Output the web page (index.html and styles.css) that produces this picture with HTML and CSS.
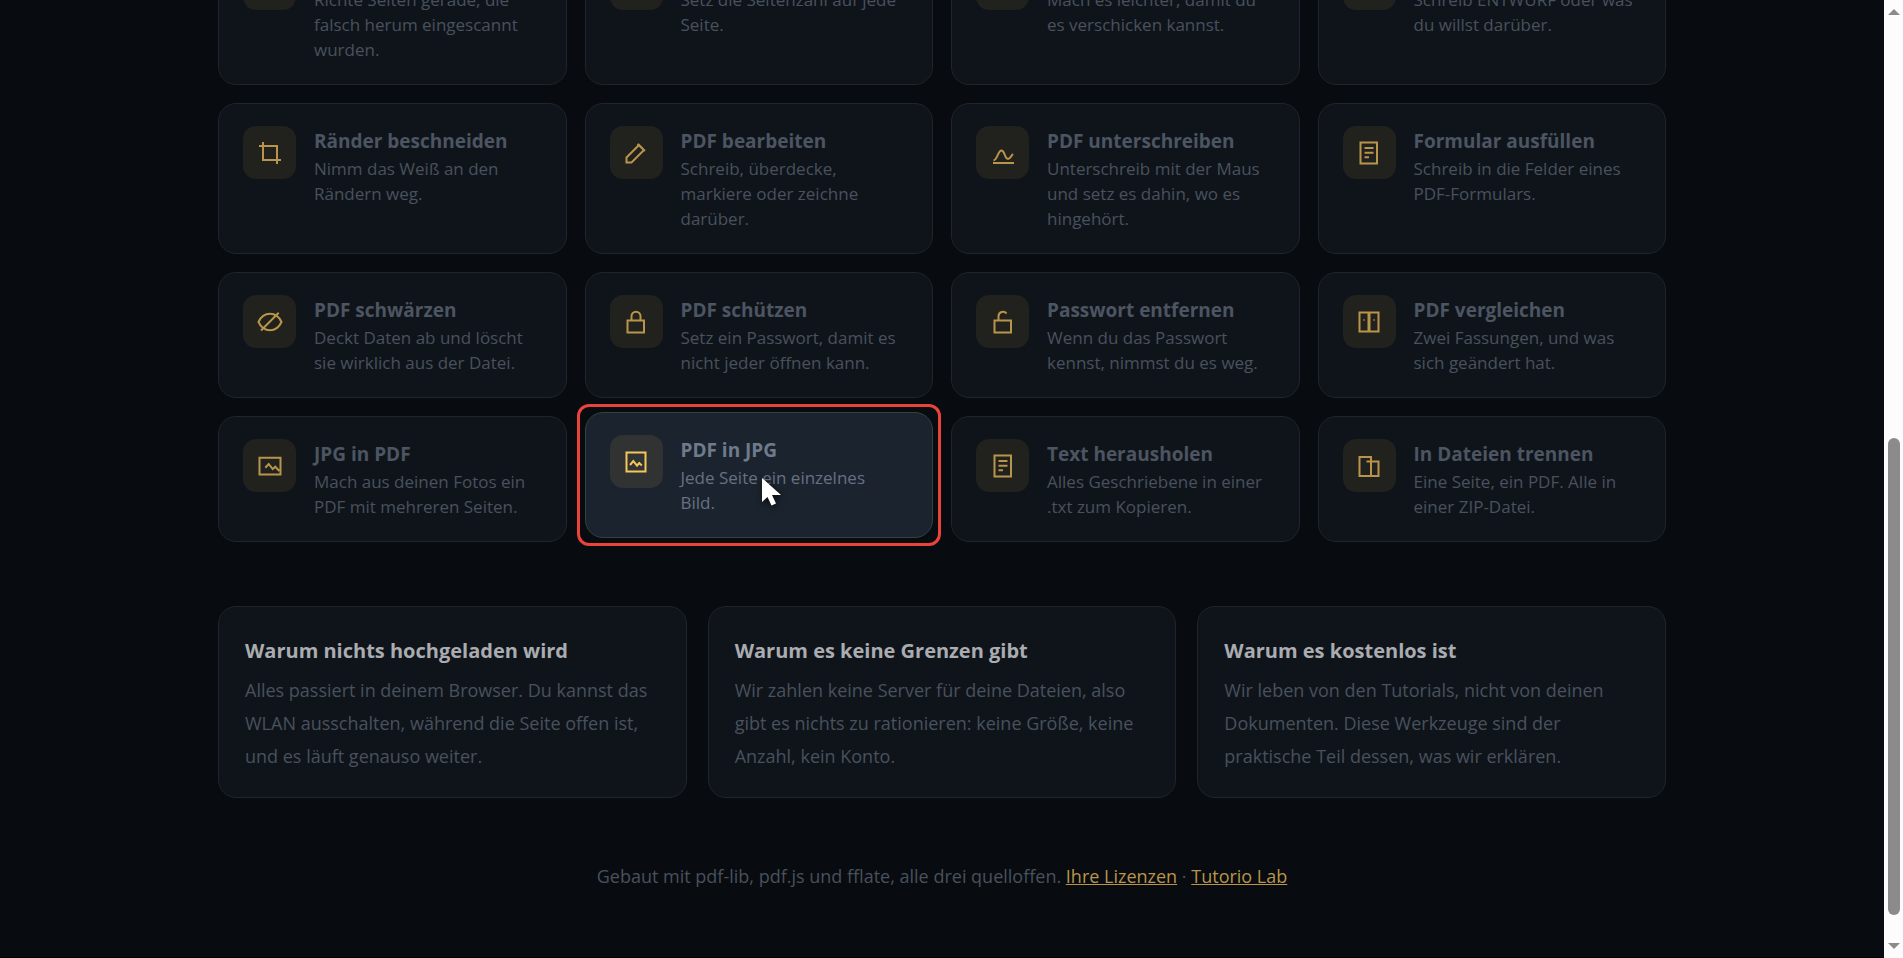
FILE: index.html
```html
<!DOCTYPE html>
<html lang="de">
<head>
    <meta charset="UTF-8">
    <meta name="viewport" content="width=device-width, initial-scale=1.0">
    <title>PDF-Werkzeuge</title>
    <link rel="stylesheet" href="styles.css">
</head>
<body>
    <div class="page">
        <main class="wrap">
            <div class="tools">
                <a class="tool" href="#">
                    <span class="tool-icon"></span>
                    <span class="tool-text">
                        <strong>Scan begradigen</strong>
                        <span>Richte Seiten gerade, die falsch herum eingescannt wurden.</span>
                    </span>
                </a>
                <a class="tool" href="#">
                    <span class="tool-icon"></span>
                    <span class="tool-text">
                        <strong>Seiten nummerieren</strong>
                        <span>Setz die Seitenzahl auf jede Seite.</span>
                    </span>
                </a>
                <a class="tool" href="#">
                    <span class="tool-icon"></span>
                    <span class="tool-text">
                        <strong>PDF verkleinern</strong>
                        <span>Mach es leichter, damit du es verschicken kannst.</span>
                    </span>
                </a>
                <a class="tool" href="#">
                    <span class="tool-icon"></span>
                    <span class="tool-text">
                        <strong>Wasserzeichen</strong>
                        <span>Schreib ENTWURF oder was du willst darüber.</span>
                    </span>
                </a>

                <a class="tool" href="#">
                    <span class="tool-icon"><svg viewBox="0 0 26 26"><path d="M6 2v18h18M2 6h18v18"/></svg></span>
                    <span class="tool-text">
                        <strong>Ränder beschneiden</strong>
                        <span>Nimm das Weiß an den Rändern weg.</span>
                    </span>
                </a>
                <a class="tool" href="#">
                    <span class="tool-icon"><svg viewBox="0 0 26 26"><path d="M3.5 22.5v-5L16 5l5 5L8.5 22.5zM14.5 4l7.5 7"/></svg></span>
                    <span class="tool-text">
                        <strong>PDF bearbeiten</strong>
                        <span>Schreib, überdecke, markiere oder zeichne darüber.</span>
                    </span>
                </a>
                <a class="tool" href="#">
                    <span class="tool-icon"><svg viewBox="0 0 26 26"><path d="M3 23h21M3.5 20.5c4-1 4.5-10 8-10s3 8.5 6.500 8.500c2 0 3-3 5-5"/></svg></span>
                    <span class="tool-text">
                        <strong>PDF unterschreiben</strong>
                        <span>Unterschreib mit der Maus und setz es dahin, wo es hingehört.</span>
                    </span>
                </a>
                <a class="tool" href="#">
                    <span class="tool-icon"><svg viewBox="0 0 26 26"><path d="M4.5 2.5H21v21H4.5zM8.5 8h9M8.5 12.8h9M8.5 17.3H13"/></svg></span>
                    <span class="tool-text">
                        <strong>Formular ausfüllen</strong>
                        <span>Schreib in die Felder eines PDF-Formulars.</span>
                    </span>
                </a>

                <a class="tool" href="#">
                    <span class="tool-icon"><svg viewBox="0 0 26 26"><path d="M1.5 13C4 7.500 8.500 4.800 13 4.800S22 7.500 24.500 13C22 18.500 17.500 21.200 13 21.200S4 18.500 1.500 13zM4 21.500L21.700 3.700"/></svg></span>
                    <span class="tool-text">
                        <strong>PDF schwärzen</strong>
                        <span>Deckt Daten ab und löscht sie wirklich aus der Datei.</span>
                    </span>
                </a>
                <a class="tool" href="#">
                    <span class="tool-icon"><svg viewBox="0 0 26 26"><path d="M4.5 11.5H21v12H4.5zM8.500 11.500V7.200a4.500 4.500 0 0 1 9 0v4.300"/></svg></span>
                    <span class="tool-text">
                        <strong>PDF schützen</strong>
                        <span>Setz ein Passwort, damit es nicht jeder öffnen kann.</span>
                    </span>
                </a>
                <a class="tool" href="#">
                    <span class="tool-icon"><svg viewBox="0 0 26 26"><path d="M4.5 11.5H21v12H4.5zM8.500 11.500V7.200a4.500 4.500 0 0 1 8-2.700"/></svg></span>
                    <span class="tool-text">
                        <strong>Passwort entfernen</strong>
                        <span>Wenn du das Passwort kennst, nimmst du es weg.</span>
                    </span>
                </a>
                <a class="tool" href="#">
                    <span class="tool-icon"><svg viewBox="0 0 26 26"><path d="M3.5 3.5h9v19h-9zM13.500 3.500h9v19h-9zM7.500 11h1M17.500 11h1"/></svg></span>
                    <span class="tool-text">
                        <strong>PDF vergleichen</strong>
                        <span>Zwei Fassungen, und was sich geändert hat.</span>
                    </span>
                </a>

                <a class="tool" href="#">
                    <span class="tool-icon"><svg viewBox="0 0 26 26"><path d="M2.5 4.800h21v16.700h-21zM8.300 14.700l3.400-3.700 4 5 2.600-2.300 4 4.300"/></svg></span>
                    <span class="tool-text">
                        <strong>JPG in PDF</strong>
                        <span>Mach aus deinen Fotos ein PDF mit mehreren Seiten.</span>
                    </span>
                </a>
                <a class="tool tool-active" href="#">
                    <span class="tool-icon"><svg viewBox="0 0 26 26"><path d="M3.5 3.5h19v19h-19zM7 16l3.300-4 3.700 4.700 2.200-2.700 2.600 2.500"/></svg></span>
                    <span class="tool-text">
                        <strong>PDF in JPG</strong>
                        <span>Jede Seite ein einzelnes Bild.</span>
                    </span>
                    <svg class="cursor" viewBox="0 0 20 28"><path d="M0 0v24l5.500-5 4 8.500 4.500-2-4-8.500h9z"/></svg>
                </a>
                <a class="tool" href="#">
                    <span class="tool-icon"><svg viewBox="0 0 26 26"><path d="M4.5 2.5H21v21H4.5zM8.5 8h9M8.5 12.8h9M8.5 17.3H13"/></svg></span>
                    <span class="tool-text">
                        <strong>Text herausholen</strong>
                        <span>Alles Geschriebene in einer .txt zum Kopieren.</span>
                    </span>
                </a>
                <a class="tool" href="#">
                    <span class="tool-icon"><svg viewBox="0 0 26 26"><path d="M3.5 4H15v19H3.5zM10.5 8.5h12V23H15"/></svg></span>
                    <span class="tool-text">
                        <strong>In Dateien trennen</strong>
                        <span>Eine Seite, ein PDF. Alle in einer ZIP-Datei.</span>
                    </span>
                </a>
            </div>

            <div class="reasons">
                <section class="reason">
                    <h2>Warum nichts hochgeladen wird</h2>
                    <p>Alles passiert in deinem Browser. Du kannst das WLAN ausschalten, während die Seite offen ist, und es läuft genauso weiter.</p>
                </section>
                <section class="reason">
                    <h2>Warum es keine Grenzen gibt</h2>
                    <p>Wir zahlen keine Server für deine Dateien, also gibt es nichts zu rationieren: keine Größe, keine Anzahl, kein Konto.</p>
                </section>
                <section class="reason">
                    <h2>Warum es kostenlos ist</h2>
                    <p>Wir leben von den Tutorials, nicht von deinen Dokumenten. Diese Werkzeuge sind der praktische Teil dessen, was wir erklären.</p>
                </section>
            </div>
        </main>

        <footer class="footer">
            Gebaut mit pdf-lib, pdf.js und fflate, alle drei quelloffen.
            <a href="#">Ihre Lizenzen</a> · <a href="#">Tutorio Lab</a>
        </footer>
    </div>

    <!-- Scrollbar -->
    <div class="scrollbar" aria-hidden="true">
        <svg class="scroll-arrow" viewBox="0 0 12 6"><path d="M0 6L6 0l6 6z"/></svg>
        <div class="scroll-track"><div class="scroll-thumb"></div></div>
        <svg class="scroll-arrow" viewBox="0 0 12 6"><path d="M0 0l6 6 6-6z"/></svg>
    </div>
</body>
</html>
```
FILE: styles.css
```css
:root {
    --bg: #080b10;
    --card: #0f141b;
    --card-border: #1f252c;
    --title: #4c5561;
    --muted: #49515c;
    --gold: #b8954a;
}

* {
    box-sizing: border-box;
}

body {
    margin: 0;
    height: 100vh;
    display: flex;
    overflow: hidden;
    background: var(--bg);
    color: var(--muted);
    font-family: "Segoe UI", "Open Sans", "Noto Sans", sans-serif;
}

/* Page is scrolled to its end */
.page {
    flex: 1;
    display: flex;
    flex-direction: column;
    justify-content: flex-end;
    border-bottom: 1px solid #000;
}

.wrap {
    width: 100%;
    max-width: 1448px;
    margin: 0 auto;
}

/* Tool cards */
.tools {
    display: grid;
    grid-template-columns: repeat(4, 1fr);
    gap: 18px;
}

.tool {
    position: relative;
    display: flex;
    align-items: flex-start;
    gap: 18px;
    padding: 22px 29px 22px 24px;
    background: var(--card);
    border: 1px solid var(--card-border);
    border-radius: 18px;
    color: var(--muted);
    text-decoration: none;
}

.tool-icon {
    flex: none;
    display: flex;
    align-items: center;
    justify-content: center;
    width: 53px;
    height: 53px;
    border-radius: 13px;
    background: #21211e;
    color: var(--gold);
}

.tool-icon svg {
    width: 26px;
    height: 26px;
    fill: none;
    stroke: currentColor;
    stroke-width: 2;
}

.tool-text {
    display: flex;
    flex-direction: column;
    font-size: 17px;
    line-height: 25px;
}

.tool-text strong {
    color: var(--title);
    font-size: 19px;
    font-weight: 700;
    line-height: 30px;
}

/* Hovered card with marker frame */
.tool-active {
    background: #1b232e;
    border-color: #30433f;
    color: #667182;
    transform: translateY(-4px);
}

.tool-active .tool-icon {
    background: #313232;
    color: #f3c75c;
}

.tool-active strong {
    color: #6f7b8b;
}

.tool-active::after {
    content: "";
    position: absolute;
    inset: -9px;
    border: 3px solid #e9433a;
    border-radius: 12px;
}

.cursor {
    position: absolute;
    left: 176px;
    top: 65px;
    width: 20px;
    height: 28px;
    fill: #fff;
    overflow: visible;
    filter: drop-shadow(1px 2px 3px rgba(0, 0, 0, 0.7));
}

/* Reasons */
.reasons {
    display: grid;
    grid-template-columns: repeat(3, 1fr);
    gap: 21px;
    margin-top: 64px;
}

.reason {
    padding: 28px 26px 24px;
    background: var(--card);
    border: 1px solid var(--card-border);
    border-radius: 18px;
}

.reason h2 {
    margin: 0 0 7px;
    color: #aaacb0;
    font-size: 20px;
    line-height: 32px;
}

.reason p {
    margin: 0;
    font-size: 18px;
    line-height: 33px;
}

.footer {
    padding: 62px 0 64px;
    text-align: center;
    font-size: 18px;
    line-height: 33px;
}

.footer a {
    color: var(--gold);
}

/* Scrollbar */
.scrollbar {
    flex: none;
    width: 19px;
    padding: 9px 0;
    display: flex;
    flex-direction: column;
    align-items: center;
    background: #fcfcfc;
}

.scroll-arrow {
    width: 12px;
    height: 6px;
    fill: #8b8b8b;
}

.scroll-track {
    flex: 1;
    display: flex;
    flex-direction: column;
    justify-content: flex-end;
    padding-bottom: 28px;
}

.scroll-thumb {
    width: 12px;
    height: 53%;
    border-radius: 6px;
    background: #8b8b8b;
}
```
